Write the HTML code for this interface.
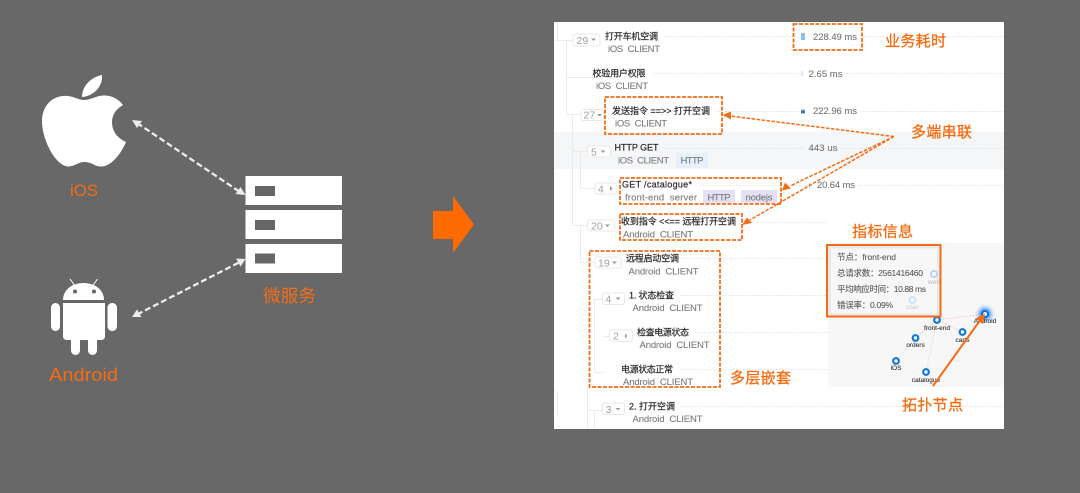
<!DOCTYPE html>
<html><head><meta charset="utf-8"><style>
html,body{margin:0;padding:0;background:#686868;width:1080px;height:493px;overflow:hidden}
svg{display:block}
text{font-family:"Liberation Sans","Noto Sans CJK SC",sans-serif}
.t{font-size:9px;fill:#2b2b2b;stroke:#2b2b2b;stroke-width:.2}
.s{font-size:9.5px;fill:#7d7d7d;stroke:#7d7d7d;stroke-width:.12}
.v{font-size:9.5px;fill:#777;stroke:#777;stroke-width:.12}
.b{font-size:10.5px;fill:#a0a0a0}
.o{font-size:15px;fill:#f56c12;stroke:#f56c12;stroke-width:.3}
.m{font-size:8.5px;fill:#5a5a5a;stroke:#5a5a5a;stroke-width:.1}
.n{font-size:6.5px;fill:#333;text-anchor:middle;stroke:#333;stroke-width:.1}
.tree{stroke:#ebebeb;stroke-width:1;fill:none}
.dot{stroke:#e4e4e4;stroke-width:1;stroke-dasharray:1.5 1.5;fill:none}
.btn{fill:#fff;stroke:#e8e8e8;stroke-width:1}
.box{fill:none;stroke:#f56c12;stroke-width:1.8;stroke-dasharray:4 1.5}
.arr{fill:none;stroke:#f56c12;stroke-width:1.5;stroke-dasharray:3.5 1.5}
.tri{fill:#f56c12}
.node{fill:#fff;stroke:#0f78d6;stroke-width:2.2}
</style></head><body>
<svg width="1080" height="493" viewBox="0 0 1080 493" xmlns="http://www.w3.org/2000/svg">
<defs><filter id="bl" x="0" y="0" width="100%" height="100%"><feGaussianBlur stdDeviation="0.35"/></filter>
<filter id="gl" x="-100%" y="-100%" width="300%" height="300%"><feGaussianBlur stdDeviation="2.5"/></filter></defs>
<rect width="1080" height="493" fill="#686868"/>
<g filter="url(#bl)">
<!-- Apple -->
<path fill="#fff" d="M84 100C78 100 72 95 63 96C50 97 42 108 42 121C42 140 56 167 69 166.5C75 166 78 162 85 162C92 162 95 167 102 166.5C112 166 122 152 126 142C117 138 112 131 112 122C112 115 116 109 123 105C118 98 110 95 103 95.5C96 96 90 100 84 100Z"/>
<path fill="#fff" d="M82 97C82 86 91 77 102 75C103 86 94 96 82 97Z"/>
<text x="70" y="196" font-size="17" fill="#f56c12" textLength="28" lengthAdjust="spacingAndGlyphs">iOS</text>
<!-- Android -->
<path fill="#fff" d="M63 300C63 290 72 283 83.500 283C95 283 104 290 104 300Z"/>
<circle cx="75" cy="291.500" r="2" fill="#666"/><circle cx="94" cy="291.500" r="2" fill="#666"/>
<path stroke="#fff" stroke-width="1" d="M70 279L75 286M97.500 279L92.500 286"/>
<path fill="#fff" d="M63 303H105V336Q105 340 101 340H67Q63 340 63 336Z"/>
<rect x="51" y="303" width="9" height="28" rx="4.500" fill="#fff"/>
<rect x="107.500" y="303" width="9.500" height="28" rx="4.500" fill="#fff"/>
<rect x="71" y="335" width="9" height="20" rx="4.500" fill="#fff"/>
<rect x="88" y="335" width="9" height="20" rx="4.500" fill="#fff"/>
<text x="49" y="381" font-size="18" fill="#f56c12" textLength="69" lengthAdjust="spacingAndGlyphs">Android</text>
<!-- Servers -->
<rect x="245.500" y="176" width="96.500" height="29" fill="#fff"/>
<rect x="245.500" y="210" width="96.500" height="29" fill="#fff"/>
<rect x="245.500" y="244" width="96.500" height="29" fill="#fff"/>
<rect x="255" y="186" width="20" height="10" fill="#666"/>
<rect x="255" y="220" width="20" height="10" fill="#666"/>
<rect x="255" y="253.500" width="20" height="10" fill="#666"/>
<text x="263" y="302" font-size="17.500" fill="#f56c12" textLength="53">微服务</text>
<!-- dashed white arrows -->
<path d="M137 123L240 192M137 314.500L240 262" stroke="#ececec" stroke-width="2.300" stroke-dasharray="6 3" fill="none"/>
<path fill="#ececec" d="M132 120L142 121L137 128ZM245.500 195L235.500 194L240.500 187ZM132 317L137 309.500L141.500 317ZM245.500 259L240.500 266.500L236 258.500Z"/>
<!-- big arrow -->
<path fill="#ff6a00" d="M433 211H453V196L474 224.500L453 253V239H433Z"/>
</g>

<!-- Panel -->
<g filter="url(#bl)">
<rect x="554" y="22" width="450" height="407" fill="#fff"/>
<rect x="554" y="132" width="450" height="37" fill="#f5f6f8"/>
<rect x="828" y="243" width="176" height="144" fill="#f7f7f8"/>
<rect x="554" y="390" width="3.500" height="24" fill="#fff"/>
<path d="M557.500 390V414" stroke="#eee" fill="none"/>

<!-- tree lines -->
<path class="tree" d="M557.500 22V40.500H573M566.500 40.500V114.500M566.500 77.500H598M566.500 114.500H581M572.500 114.500V225.500M572.500 151.500H587M580.500 151.500V188.500H595M572.500 225.500H587M580.500 225.500V262.500H595M594.500 298V372.500M594.500 299.500H602M594.500 372.500H603M603.500 336.500H609M587.500 387V429M587.500 410.500H602M594.500 410.500V429"/>

<!-- dotted row lines -->
<path class="dot" d="M665 36.500H793M862 36.500H1004M653 73.500H800M844 73.500H1004M716 111.500H800M860 111.500H1004M665 148.500H806M840 148.500H1004M700 185.500H814M858 185.500H1004M745 222.500H828M678 258.500H828M680 295.500H828M695 332.500H828M680 369.500H828M680 406.500H1004"/>

<!-- buttons -->
<rect class="btn" x="573" y="34" width="27" height="12" rx="2.500"/>
<text class="b" x="576.500" y="44">29</text><path fill="#999" d="M591 38.500h5l-2.500 2.500z"/>
<rect class="btn" x="581" y="109.500" width="22.500" height="11" rx="2.500"/>
<text class="b" x="583.500" y="118.500">27</text><path fill="#999" d="M597 114h5l-2.500 2.500z"/>
<rect class="btn" x="587.500" y="146" width="22.500" height="11" rx="2.500"/>
<text class="b" x="591" y="155.500">5</text><path fill="#999" d="M600.500 150.500h5l-2.500 2.500z"/>
<rect class="btn" x="595" y="183" width="22" height="11" rx="2.500"/>
<text class="b" x="598" y="192.500">4</text><path fill="#999" d="M610 186v5l2.500-2.500z"/>
<rect class="btn" x="587.500" y="220" width="27" height="11" rx="2.500"/>
<text class="b" x="591" y="229.500">20</text><path fill="#999" d="M605 224.500h5l-2.500 2.500z"/>
<rect class="btn" x="595" y="257" width="26" height="11" rx="2.500"/>
<text class="b" x="598" y="266.500">19</text><path fill="#999" d="M612 261.500h5l-2.500 2.500z"/>
<rect class="btn" x="602.500" y="293" width="22" height="11.500" rx="2.500"/>
<text class="b" x="605.500" y="302.500">4</text><path fill="#999" d="M615.500 297.500h5l-2.500 2.500z"/>
<rect class="btn" x="609.500" y="330" width="23" height="11.500" rx="2.500"/>
<text class="b" x="613" y="339.500">2</text><path fill="#999" d="M625 333.500v5l2.500-2.500z"/>
<rect class="btn" x="602.500" y="403" width="22" height="11.500" rx="2.500"/>
<text class="b" x="605.500" y="413">3</text><path fill="#999" d="M615.500 408h5l-2.500 2.500z"/>

<!-- row text -->
<text class="t" x="605" y="39.500" textLength="53">打开车机空调</text>
<text class="s" x="608" y="52" textLength="52" xml:space="preserve">iOS  CLIENT</text>
<text class="t" x="592.500" y="76.500" textLength="53">校验用户权限</text>
<text class="s" x="596" y="89" textLength="52" xml:space="preserve">iOS  CLIENT</text>
<text class="t" x="612" y="114" textLength="98" xml:space="preserve">发送指令 ==&gt;&gt; 打开空调</text>
<text class="s" x="615" y="126.500" textLength="52" xml:space="preserve">iOS  CLIENT</text>
<text class="t" x="614.500" y="150.500" font-size="9.500" textLength="44">HTTP GET</text>
<text class="s" x="618" y="163.500" textLength="51" xml:space="preserve">iOS  CLIENT</text>
<rect x="676" y="153" width="32" height="15" fill="#e6f1fb"/>
<text class="s" x="680.500" y="163.500" textLength="23">HTTP</text>
<text class="t" x="622" y="187.500" textLength="70">GET /catalogue*</text>
<text class="s" x="625" y="200.500" textLength="72" xml:space="preserve">front-end  server</text>
<rect x="703" y="190" width="32" height="13" fill="#e6e0f7"/>
<text class="s" x="707.500" y="200.500" textLength="23">HTTP</text>
<rect x="741" y="190" width="36" height="13" fill="#e6e0f7"/>
<text class="s" x="745.500" y="200.500" textLength="27">nodejs</text>
<text class="t" x="621" y="224.500" textLength="115" xml:space="preserve">收到指令 &lt;&lt;== 远程打开空调</text>
<text class="s" x="623" y="237.500" textLength="70" xml:space="preserve">Android  CLIENT</text>
<text class="t" x="626" y="261.500" textLength="53">远程启动空调</text>
<text class="s" x="628.500" y="274.500" textLength="70" xml:space="preserve">Android  CLIENT</text>
<text class="t" x="629" y="298.500" textLength="45">1. 状态检查</text>
<text class="s" x="632.500" y="311" textLength="70" xml:space="preserve">Android  CLIENT</text>
<text class="t" x="637" y="335.500" textLength="52">检查电源状态</text>
<text class="s" x="639.500" y="348" textLength="70" xml:space="preserve">Android  CLIENT</text>
<text class="t" x="621" y="372.500" textLength="52">电源状态正常</text>
<text class="s" x="623" y="385" textLength="70" xml:space="preserve">Android  CLIENT</text>
<text class="t" x="629" y="409.500" textLength="46">2. 打开空调</text>
<text class="s" x="632.500" y="422" textLength="70" xml:space="preserve">Android  CLIENT</text>

<!-- values -->
<rect x="801" y="33" width="4" height="7" fill="#8cc0f0"/>
<text class="v" x="813" y="40" textLength="44">228.49 ms</text>
<rect x="801.500" y="71" width="1" height="5" fill="#a9cdf0"/>
<text class="v" x="808.500" y="77" textLength="34">2.65 ms</text>
<rect x="801" y="109.500" width="4" height="4" fill="#6aa5de"/>
<rect x="801" y="111.500" width="4" height="1" fill="#334"/>
<text class="v" x="813" y="114" textLength="44">222.96 ms</text>
<text class="v" x="808.500" y="151" textLength="29">443 us</text>
<rect x="809" y="183" width="1" height="5" fill="#a9cdf0"/>
<text class="v" x="817" y="188" textLength="38">20.64 ms</text>

<!-- topology -->
<path d="M937 320L985 314M937 320L915.500 338M937 320L962.500 332" stroke="#f3b3b3" stroke-width="0.8" stroke-dasharray="1.500 1.500" fill="none"/>
<path d="M915.500 338L896 361M937 320L926 372" stroke="#d8d8d8" stroke-width="0.8" stroke-dasharray="1.500 1.500" fill="none"/>
<circle cx="985" cy="314" r="6" fill="#2a7df0" filter="url(#gl)"/>
<circle class="node" cx="937" cy="320" r="2.800"/><text class="n" x="937" y="330">front-end</text>
<circle class="node" cx="915.500" cy="338" r="2.800"/><text class="n" x="915.500" y="347">orders</text>
<circle class="node" cx="962.500" cy="332" r="2.800"/><text class="n" x="962.500" y="342">carts</text>
<circle class="node" cx="985" cy="314" r="3"/><text class="n" x="985" y="323">Android</text>
<circle class="node" cx="896" cy="361" r="2.800"/><text class="n" x="896" y="370">iOS</text>
<circle class="node" cx="926" cy="372" r="2.800"/><text class="n" x="926" y="382">catalogue</text>

<rect x="827" y="245" width="113.500" height="71.500" fill="#e9e9e9" stroke="#f56c12" stroke-width="2"/>
<rect x="831" y="248.500" width="106" height="65" rx="2" fill="#f7f7f7"/>
<circle cx="934" cy="274" r="3" fill="#fff" stroke="#b8d4f0" stroke-width="2"/>
<text x="934" y="284" font-size="6.500" text-anchor="middle" fill="#bbb">web</text>
<circle cx="912.500" cy="300" r="3" fill="#fff" stroke="#cfe0f3" stroke-width="2"/>
<text x="912.500" y="309" font-size="6.500" text-anchor="middle" fill="#ccc">user</text>
<text class="m" x="837" y="260" textLength="59">节点：front-end</text>
<text class="m" x="837" y="276" textLength="86">总请求数：2561416460</text>
<text class="m" x="837" y="292" textLength="89">平均响应时间：10.88 ms</text>
<text class="m" x="837" y="308" textLength="56">错误率：0.09%</text>

<!-- orange dashed boxes -->
<rect class="box" x="793.500" y="24" width="68.500" height="26"/>
<rect class="box" x="605" y="97" width="117" height="37"/>
<rect class="box" x="620" y="178" width="161" height="26"/>
<rect class="box" x="620" y="214" width="122" height="26"/>
<rect class="box" x="589.500" y="251" width="130.500" height="136"/>

<!-- orange arrows -->
<path class="arr" d="M894 136.500L730 116M894 136.500L790 186M894 136.500L750 220"/>
<path class="tri" d="M722.500 115L731 111.500V119.500ZM782 190.500L785 182.500L791 188.500ZM742 225L747 217.500L752 223Z"/>
<path d="M933 386L981 319" stroke="#f56c12" stroke-width="2" fill="none"/>
<path class="tri" d="M985 313.500L983 324L975.500 318.500Z"/>

<!-- labels -->
<text class="o" x="885" y="46" textLength="61">业务耗时</text>
<text class="o" x="911" y="137" textLength="61">多端串联</text>
<text class="o" x="852" y="236.500" textLength="61">指标信息</text>
<text class="o" x="730" y="383" textLength="61">多层嵌套</text>
<text class="o" x="902" y="410" textLength="61">拓扑节点</text>
</g>
</svg>
</body></html>
